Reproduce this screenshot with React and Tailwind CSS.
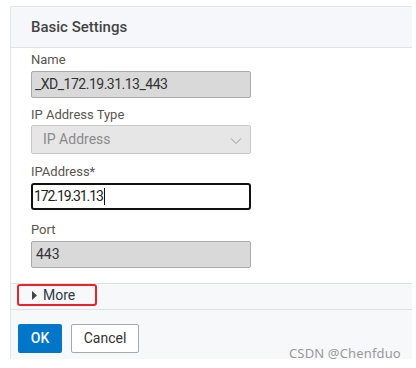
import React from "react"

const Label = ({ children, className = "" }) => (
    <div className={`text-[13px] leading-[16px] text-[#5a5550] ${className}`}>{children}</div>
)

export default function App() {
    return (
        <div className="relative w-[416px] h-[368px] bg-white font-['Roboto',sans-serif] overflow-hidden">
            <div className="ml-[10px] mt-[6px] w-[402px] h-[353px] border-l border-t border-[#e3e6ea] flex flex-col">
                {/* Header */}
                <div className="h-[41px] shrink-0 bg-[#f5f7fa] border-b border-[#dde2e7] pl-[20px] flex items-center">
                    <span className="text-[15px] font-medium text-[#444] pt-[1px]">Basic Settings</span>
                </div>

                {/* Fields */}
                <div className="pl-[20px] pt-[4px] flex flex-col h-[235px] shrink-0">
                    <Label className="mb-[3px]">Name</Label>
                    <div className="w-[220px] h-[27px] bg-[#d9d9d9] border border-[#aaa] rounded-[2px] flex items-center pl-[3px] text-[14px] text-[#333] tracking-[-0.5px]">
                        _XD_172.19.31.13_443
                    </div>

                    <Label className="mt-[9px] mb-[2px]">IP Address Type</Label>
                    <div className="w-[220px] h-[29px] bg-[#e6e6e6] border border-[#c9c9c9] rounded-[2px] flex items-center justify-between pl-[11px] pr-[8px] text-[14px] text-[#8a8a8a]">
                        <span>IP Address</span>
                        <svg width="12" height="8" viewBox="0 0 12 8" fill="none" className="mt-[2px]">
                            <path d="M1 1.5 L6 6.5 L11 1.5" stroke="#999" strokeWidth="1" />
                        </svg>
                    </div>

                    <Label className="mt-[10px] mb-[3px]">IPAddress*</Label>
                    <div className="w-[220px] h-[27px] bg-white border-2 border-[#111] rounded-[3px] flex items-center pl-[1px] text-[14px] text-[#222] tracking-[-1.1px]">
                        <span>172.19.31.13</span>
                        <span className="inline-block ml-[1px] w-[1px] h-[17px] bg-[#111]" />
                    </div>

                    <Label className="mt-[12px] mb-[3px]">Port</Label>
                    <div className="w-[220px] h-[27px] bg-[#d9d9d9] border border-[#aaa] rounded-[2px] flex items-center pl-[4px] text-[14px] text-[#333]">
                        443
                    </div>
                </div>

                {/* More */}
                <div className="h-[27px] shrink-0 bg-[#f6f8fa] border-t border-b border-[#dde2e7] pl-[6px] flex items-start">
                    <div className="w-[80px] h-[22px] border-2 border-[#e8232a] rounded-[3px] flex items-center pl-[13px] gap-[6px]">
                        <svg width="5" height="9" viewBox="0 0 5 9">
                            <path d="M0 0 L5 4.5 L0 9 Z" fill="#444" />
                        </svg>
                        <span className="text-[14px] text-[#2f3a48]">More</span>
                    </div>
                </div>

                {/* Footer */}
                <div className="flex-1 bg-[#f6f8fa] pl-[7px] pt-[14px] flex items-start gap-[9px]">
                    <button className="w-[44px] h-[29px] bg-[#0076c8] rounded-[2px] text-white text-[14px] font-medium">OK</button>
                    <button className="w-[68px] h-[29px] bg-white border border-[#a8a8a8] rounded-[2px] text-[#333] text-[14px]">Cancel</button>
                </div>
            </div>

            {/* Watermark */}
            <div className="absolute left-[289px] top-[344px] text-[13px] tracking-[0.15px] text-[#9a9a9a] font-['Noto_Sans',sans-serif]">
                CSDN @Chenfduo
            </div>
        </div>
    )
}
